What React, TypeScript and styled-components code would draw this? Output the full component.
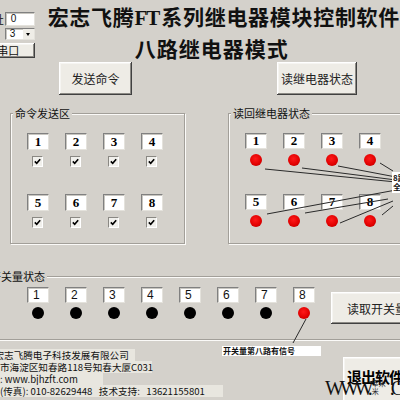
import React from 'react';
import styled, { createGlobalStyle } from 'styled-components';

const FACE = '#d4d1cb';
const CJK = '"Noto Sans CJK SC", "Liberation Sans", sans-serif';

const GlobalStyle = createGlobalStyle`
    html, body {
        margin: 0;
        padding: 0;
        background: ${FACE};
    }
`;

const relays = [1, 2, 3, 4, 5, 6, 7, 8];

export default function App() {
    return (
        <>
            <GlobalStyle />
            <Window>
                <Header>
                    <PortPanel>
                        <PortRow>
                            <PortLabel>地址</PortLabel>
                            <SmallInput>0</SmallInput>
                        </PortRow>
                        <PortRow $gap={2}>
                            <Combo>
                                <span>3</span>
                                <ComboArrow />
                            </Combo>
                        </PortRow>
                        <PortButton>打开串口</PortButton>
                    </PortPanel>
                    <Titles>
                        <MainTitle>
                            宏志飞腾<Latin>FT</Latin>系列继电器模块控制软件
                        </MainTitle>
                        <SubTitle>八路继电器模式</SubTitle>
                    </Titles>
                </Header>

                <ButtonRow>
                    <ClassicButton $width={73}>发送命令</ClassicButton>
                    <ClassicButton $width={80}>读继电器状态</ClassicButton>
                </ButtonRow>

                <MainRow>
                    <Group $width={175}>
                        <Legend $pull={16}>命令发送区</Legend>
                        <RelayGrid $rowGap={27}>
                            {relays.map(n => (
                                <Cell key={n} $gap={6}>
                                    <NumberBox $height={17}>{n}</NumberBox>
                                    <CheckBox>
                                        <svg width="7" height="7" viewBox="0 0 7 7">
                                            <path d="M0.8 3.4 L2.7 5.3 L6.2 1.2" fill="none" stroke="#000" strokeWidth="1.6" />
                                        </svg>
                                    </CheckBox>
                                </Cell>
                            ))}
                        </RelayGrid>
                    </Group>
                    <Group $width={200}>
                        <Legend $pull={16}>读回继电器状态</Legend>
                        <RelayGrid $rowGap={28}>
                            {relays.map(n => (
                                <Cell key={n} $gap={5}>
                                    <NumberBox $height={16}>{n}</NumberBox>
                                    <Lamp $on />
                                </Cell>
                            ))}
                        </RelayGrid>
                    </Group>
                </MainRow>

                <InputGroup>
                    <Legend $pull={41}>开关量状态</Legend>
                    <InputRow>
                        {relays.map(n => (
                            <Cell key={n} $gap={4}>
                                <InputBox>{n}</InputBox>
                                <Lamp $on={n === 8} />
                            </Cell>
                        ))}
                        <ClassicButton $width={116} $height={32} $offset={5}>
                            读取开关量状态
                        </ClassicButton>
                    </InputRow>
                </InputGroup>

                <Footer>
                    <InfoColumn>
                        <InfoLine $shift={-5.5} $width={140}>宏志飞腾电子科技发展有限公司</InfoLine>
                        <InfoLine $shift={-19.2} $width={171}>北京市海淀区知春路118号知春大厦C031</InfoLine>
                        <InfoLine $shift={-19.2} $width={122}>网址: www.bjhzft.com</InfoLine>
                        <InfoLine $shift={-19.2} $width={242}>
                            电话(传真): 010-82629448   技术支持:   13621155801
                        </InfoLine>
                    </InfoColumn>
                    <ExitButton>退出软件</ExitButton>
                </Footer>

                {/* callout leader lines drawn over the form */}
                <Overlay viewBox="0 0 400 400">
                    <g stroke="#2a2a2a" strokeWidth="1">
                        <line x1="265" y1="169" x2="396" y2="182" />
                        <line x1="302" y1="168" x2="396" y2="180" />
                        <line x1="338" y1="166" x2="396" y2="177" />
                        <line x1="380" y1="163" x2="393" y2="171" />
                        <line x1="267" y1="214" x2="396" y2="190" />
                        <line x1="305" y1="213" x2="388" y2="199" />
                        <line x1="340" y1="223" x2="393" y2="201" />
                        <line x1="382" y1="215" x2="393" y2="206" />
                        <line x1="306" y1="319" x2="293" y2="343" />
                    </g>
                </Overlay>
                <SideNote>
                    8路继电器
                    <br />
                    全部吸合
                </SideNote>
                <SignalNote>开关量第八路有信号</SignalNote>
                <Watermark>
                    <MarkText>WWW.</MarkText>
                    <MarkSmall>宰米米</MarkSmall>
                    <MarkText>.C</MarkText>
                </Watermark>
            </Window>
        </>
    );
}

const Window = styled.div`
    position: relative;
    width: 400px;
    height: 400px;
    overflow: hidden;
    background: ${FACE};
    color: #111;
    font-family: ${CJK};
`;

const Header = styled.div`
    display: flex;
    align-items: flex-start;
`;

const PortPanel = styled.div`
    display: flex;
    flex-direction: column;
    width: 77px;
    margin-left: -40px;
    padding-top: 12px;
`;

const PortRow = styled.div<{ $gap?: number }>`
    display: flex;
    justify-content: flex-end;
    align-items: center;
    gap: 1px;
    margin-top: ${p => p.$gap ?? 0}px;
`;

const PortLabel = styled.span`
    font-size: 11px;
    line-height: 14px;
`;

const sunken = `
    background: #fff;
    border-top: 1px solid #808080;
    border-left: 1px solid #808080;
    border-right: 1px solid #e4e2dc;
    border-bottom: 1px solid #e4e2dc;
    box-shadow: inset 1px 1px 0 #c8c6c0;
    box-sizing: border-box;
`;

const SmallInput = styled.div`
    ${sunken}
    width: 30px;
    height: 14px;
    padding-left: 5px;
    font: 10px/12px "Liberation Sans", sans-serif;
`;

const Combo = styled.div`
    ${sunken}
    display: flex;
    justify-content: space-between;
    width: 30px;
    height: 12px;
    padding-left: 4px;
    font: 10px/10px "Liberation Sans", sans-serif;
`;

const ComboArrow = styled.span`
    position: relative;
    width: 11px;
    height: 10px;
    background: #efede7;
    &::after {
        content: '';
        position: absolute;
        left: 3px;
        top: 4px;
        border-left: 2.5px solid transparent;
        border-right: 2.5px solid transparent;
        border-top: 3px solid #000;
    }
`;

const raised = `
    background: #eeece6;
    box-shadow: inset -1px -1px 0 #404040, inset 1px 1px 0 #fff, inset -2px -2px 0 #8c8a85, inset 2px 2px 0 #f6f5f2;
    box-sizing: border-box;
`;

const PortButton = styled.div`
    ${raised}
    margin-top: 3px;
    height: 15px;
    font-size: 11px;
    line-height: 15px;
    text-align: center;
`;

const Titles = styled.div`
    display: flex;
    flex-direction: column;
    padding-left: 13px;
    padding-top: 6px;
    white-space: nowrap;
`;

const MainTitle = styled.div`
    font-family: ${CJK};
    font-size: 21px;
    line-height: 20px;
    font-weight: 700;
    letter-spacing: 0.7px;
    color: #111;
`;

const Latin = styled.span`
    font-family: "Liberation Serif", serif;
    letter-spacing: -1px;
    margin-right: 2px;
`;

const SubTitle = styled.div`
    margin-top: 10px;
    margin-left: 87px;
    font-size: 21px;
    line-height: 21px;
    font-weight: 700;
    letter-spacing: 1px;
    color: #111;
`;

const ButtonRow = styled.div`
    display: flex;
    gap: 145px;
    margin-top: 3px;
    padding-left: 59px;
`;

const ClassicButton = styled.div<{ $width: number; $height?: number; $offset?: number }>`
    ${raised}
    flex: none;
    display: flex;
    align-items: center;
    justify-content: center;
    width: ${p => p.$width}px;
    height: ${p => p.$height ?? 33}px;
    margin-top: ${p => p.$offset ?? 0}px;
    font-size: 12px;
    color: #222;
    white-space: nowrap;
`;

const MainRow = styled.div`
    display: flex;
    align-items: stretch;
    gap: 43px;
    margin-top: 10px;
    padding-left: 10px;
`;

const Group = styled.fieldset<{ $width: number }>`
    flex: none;
    width: ${p => p.$width}px;
    min-width: 0;
    margin: 0;
    padding: 12px 0 15px 16px;
    border: 1px solid #a29f99;
    box-shadow: 1px 1px 0 #fbfaf8, inset 1px 1px 0 #fbfaf8;
    box-sizing: border-box;
`;

// Chrome places a legend after the fieldset's left padding; pull it back to the border
const Legend = styled.legend<{ $pull: number }>`
    margin-left: ${p => 2 - p.$pull}px;
    padding: 0 2px;
    font-size: 11px;
    line-height: 16px;
    background: ${FACE};
    color: #111;
    white-space: nowrap;
`;

const RelayGrid = styled.div<{ $rowGap: number }>`
    display: grid;
    grid-template-columns: repeat(4, 22px);
    column-gap: 16px;
    row-gap: ${p => p.$rowGap}px;
`;

const Cell = styled.div<{ $gap: number }>`
    display: flex;
    flex-direction: column;
    align-items: center;
    gap: ${p => p.$gap}px;
    width: 22px;
    flex: none;
`;

const NumberBox = styled.div<{ $height: number }>`
    ${sunken}
    width: 22px;
    height: ${p => p.$height}px;
    font: bold 13px/${p => p.$height - 2}px "Liberation Serif", serif;
    text-align: center;
    color: #000;
`;

const CheckBox = styled.span`
    display: flex;
    align-items: center;
    justify-content: center;
    width: 11px;
    height: 11px;
    background: #f1f0ec;
    border-top: 1px solid #8a8883;
    border-left: 1px solid #8a8883;
    border-right: 1px solid #fff;
    border-bottom: 1px solid #fff;
    box-sizing: border-box;
    margin-left: -1px;
`;

const Lamp = styled.span<{ $on?: boolean }>`
    width: 12px;
    height: 12px;
    border-radius: 50%;
    background: ${p =>
        p.$on ? 'radial-gradient(circle at 45% 40%, #ff1a1a 0%, #e00000 60%, #a00000 100%)' : '#000'};
`;

const InputGroup = styled.fieldset`
    width: 440px;
    margin: 24px 0 0 -15px;
    padding: 3px 0 15px 41px;
    border: 1px solid #a29f99;
    box-shadow: inset 1px 1px 0 #fbfaf8, 0 1px 0 #fbfaf8;
    box-sizing: border-box;
`;

const InputRow = styled.div`
    display: flex;
    align-items: flex-start;
    gap: 16px;
`;

const InputBox = styled.div`
    ${sunken}
    width: 22px;
    height: 16px;
    padding-left: 5px;
    font: 12px/14px "Liberation Sans", sans-serif;
    color: #111;
`;

const Footer = styled.div`
    display: flex;
    align-items: flex-start;
    margin-top: 9px;
`;

const InfoColumn = styled.div`
    display: flex;
    flex-direction: column;
    align-items: flex-start;
`;

const InfoLine = styled.div<{ $shift: number; $width: number }>`
    margin-left: ${p => p.$shift}px;
    width: ${p => p.$width}px;
    height: 12px;
    background: #e8e6df;
    font-size: 9.6px;
    line-height: 12px;
    white-space: pre;
    color: #111;
`;

const ExitButton = styled.div`
    ${raised}
    flex: none;
    width: 80px;
    height: 50px;
    margin: 8px -23px 0 auto;
    padding: 9px 0 0 4px;
    font-size: 15px;
    font-weight: 700;
    letter-spacing: -1px;
    white-space: nowrap;
    color: #000;
`;

const Overlay = styled.svg`
    position: absolute;
    left: 0;
    top: 0;
    width: 400px;
    height: 400px;
    pointer-events: none;
`;

const SideNote = styled.div`
    position: absolute;
    left: 392px;
    top: 172px;
    width: 40px;
    padding: 1px 0 2px 1px;
    background: #fff;
    font-size: 8px;
    line-height: 9px;
    font-weight: 700;
    white-space: nowrap;
`;

const SignalNote = styled.div`
    position: absolute;
    left: 222px;
    top: 346px;
    width: 99px;
    height: 10px;
    padding-left: 1px;
    background: #fff;
    font-size: 8px;
    line-height: 10px;
    font-weight: 700;
    white-space: nowrap;
    box-sizing: border-box;
`;

const Watermark = styled.div`
    position: absolute;
    z-index: 5;
    left: 325px;
    top: 378px;
    display: flex;
    align-items: flex-start;
    pointer-events: none;
`;

const MarkText = styled.span`
    font-family: "Liberation Serif", "DejaVu Serif", serif;
    font-size: 20px;
    line-height: 20px;
    letter-spacing: -4px;
    color: #111;
`;

const MarkSmall = styled.span`
    margin: 1px 2px 0 3px;
    font-family: ${CJK};
    font-size: 7px;
    line-height: 8px;
    color: #222;
`;
